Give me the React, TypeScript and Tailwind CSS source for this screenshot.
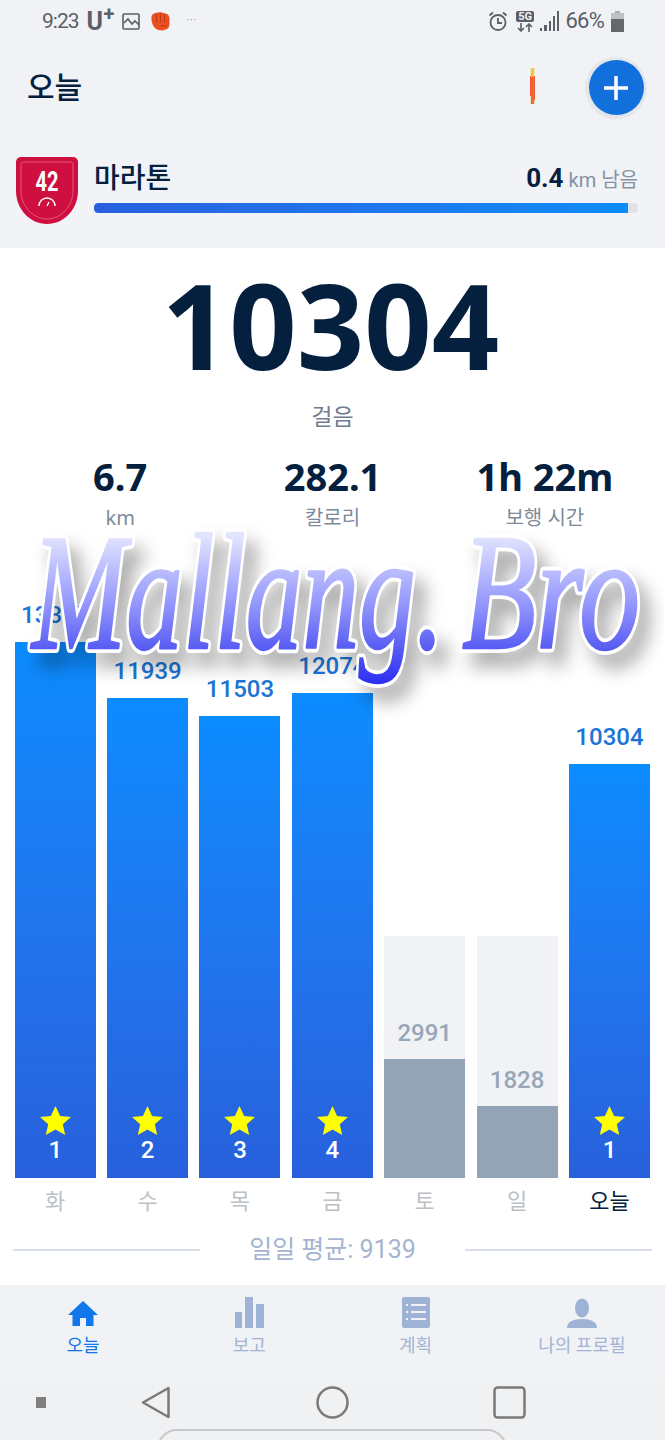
import React from "react";

const FONT = "font-['Roboto','Noto_Sans_CJK_KR',sans-serif]";
const NUM_FONT = "font-['Noto_Sans','Noto_Sans_CJK_KR',sans-serif]";

type Day = {
  day: string;
  value: string;
  fillClass: string;
  trackClass?: string;
  rank?: number;
  today?: boolean;
};

const days: Day[] = [
  { day: "화", value: "13337", fillClass: "h-[536px]", rank: 1 },
  { day: "수", value: "11939", fillClass: "h-[480px]", rank: 2 },
  { day: "목", value: "11503", fillClass: "h-[462px]", rank: 3 },
  { day: "금", value: "12074", fillClass: "h-[485px]", rank: 4 },
  { day: "토", value: "2991", fillClass: "h-[119px]", trackClass: "h-[242px]" },
  { day: "일", value: "1828", fillClass: "h-[72px]", trackClass: "h-[242px]" },
  { day: "오늘", value: "10304", fillClass: "h-[414px]", rank: 1, today: true },
];

function Star() {
  return (
    <svg width="31" height="29" viewBox="0 0 31 29" className="block">
      <path d="M15.5 0l4.6 10 10.9 1.1-8.2 7.2 2.4 10.7-9.7-5.5L5.8 29l2.4-10.7L0 11.1 10.9 10z" fill="#ffff00" />
    </svg>
  );
}

function Bar({ d }: { d: Day }) {
  if (d.rank !== undefined) {
    return (
      <div className="flex-1 flex flex-col items-center justify-end">
        <span className="text-[24px] leading-[28px] mb-[13px] font-medium text-[#1b74d6]">{d.value}</span>
        <div className={`${d.fillClass} w-full bg-gradient-to-b from-[#0a8cff] to-[#2860dc] flex flex-col items-center justify-end pb-[14px]`}>
          <Star />
          <span className="text-[24px] leading-[28px] mt-[1px] font-medium text-white">{d.rank}</span>
        </div>
      </div>
    );
  }
  return (
    <div className={`flex-1 ${d.trackClass} bg-[#f0f2f6] flex flex-col items-center justify-end`}>
      <span className="text-[24px] leading-[28px] mb-[12px] font-medium text-[#97a6b8]">{d.value}</span>
      <div className={`${d.fillClass} w-full bg-[#94a4b7]`} />
    </div>
  );
}

function StatusBar() {
  return (
    <div className="h-[42px] pl-[42px] pr-[41px] flex items-center justify-between text-[#5c5f66]">
      <div className="flex items-center">
        <span className="text-[21px] leading-none tracking-[-1px]">9:23</span>
        <span className="ml-[8px] text-[25px] font-bold leading-none w-[29px] relative">
          U
          <span className="absolute left-[17px] -top-[5px] text-[20px] font-bold">+</span>
        </span>
        <svg width="18" height="17" viewBox="0 0 18 17" fill="none" stroke="#5c5f66" strokeWidth="1.6" className="ml-[6px]">
          <rect x="1" y="1" width="16" height="15" rx="1" />
          <path d="M2 10l4-4 4 5 3-3 4 4" />
        </svg>
        <svg width="20" height="20" viewBox="0 0 20 20" className="ml-[10px]">
          <path d="M2 4C4 2 8 1 12 1.500l5 1.500c1.500 1 2.500 2.500 2.500 4.500v5c0 3-1 4.500-2.500 5.500l-4 1.500c-4 0-7.500-1-9-3.500C2 13 .5 7 2 4z" fill="#ea4f20" />
          <path d="M6.500 3v8M10.500 2.500v9M14.500 3v8M11 15h6" stroke="#b83c16" strokeWidth="1" />
        </svg>
        <span className="ml-[17px] text-[10px] leading-none tracking-[1px] text-[#8b8e94]">···</span>
      </div>
      <div className="flex items-center">
        <svg width="20" height="20" viewBox="0 0 20 20" fill="none" stroke="#5c5f66" strokeWidth="1.800">
          <circle cx="10" cy="11.500" r="7.500" />
          <path d="M10 7v5h4M1.500 4.500L5 1.500M18.500 4.500L15 1.500" />
        </svg>
        <div className="ml-[8px] flex flex-col items-center w-[19px]">
          <span className="text-[11px] leading-[11px] font-bold text-[#f0f2f6] bg-[#5c5f66] rounded-[2px] px-[2px]">5G</span>
          <svg width="16" height="9" viewBox="0 0 16 9" fill="none" stroke="#5c5f66" strokeWidth="1.600" className="mt-[1px]">
            <path d="M4 0v8M1 5l3 3 3-3M12 9V1M9 4l3-3 3 3" />
          </svg>
        </div>
        <svg width="20" height="20" viewBox="0 0 20 20" fill="#5c5f66" className="ml-[5px]">
          <rect x="0" y="17" width="2" height="3" />
          <rect x="4" y="14" width="3" height="6" />
          <rect x="9" y="10" width="2" height="10" />
          <rect x="13" y="5" width="2" height="15" />
          <rect x="17" y="0" width="2" height="20" />
        </svg>
        <span className="ml-[6px] text-[22px] leading-none tracking-[-0.8px]">66%</span>
        <svg width="13" height="21" viewBox="0 0 13 21" className="ml-[7px]">
          <rect x="4" y="0" width="5" height="3" fill="#a9abae" />
          <rect x="0" y="2" width="13" height="7" fill="#bfc1c4" />
          <rect x="0" y="8" width="13" height="13" fill="#65676b" />
        </svg>
      </div>
    </div>
  );
}

function TitleRow() {
  return (
    <div className="h-[91px] pl-[27px] pr-[18px] flex items-center justify-between">
      <h1 className="text-[30px] leading-none font-medium text-[#04203e]">오늘</h1>
      <div className="flex items-center">
        <svg width="5" height="36" viewBox="0 0 5 36" className="mr-[50px] -mt-[3px]">
          <rect x="0" y="0" width="5" height="36" fill="#f4e7c4" />
          <path d="M2 0h2v8h1v24H4v4H1v-8H0V8h1z" fill="#ee5a34" />
          <path d="M2 0h2v9H1z" fill="#f6cf4e" />
          <path d="M2 0h2v36H1z" fill="#e9a13c" fillOpacity="0.25" />
        </svg>
        <div className="w-[62px] h-[62px] rounded-full bg-[#e4e6ea] flex items-center justify-center">
          <div className="w-[55px] h-[55px] rounded-full bg-[#1170dc] flex items-center justify-center">
            <svg width="24" height="24" viewBox="0 0 24 24" stroke="#ffffff" strokeWidth="3.500">
              <path d="M12 0v24M0 12h24" />
            </svg>
          </div>
        </div>
      </div>
    </div>
  );
}

function MarathonBadge() {
  return (
    <svg width="62" height="67" viewBox="0 0 62 67" className="shrink-0">
      <path d="M5 0h52a5 5 0 0 1 5 5v29c0 18-14 33-31 33S0 52 0 34V5a5 5 0 0 1 5-5z" fill="#cf0f40" />
      <path d="M7 5h48a2 2 0 0 1 2 2v27c0 15-12 28-26 28S5 49 5 34V7a2 2 0 0 1 2-2z" fill="none" stroke="#e2587c" strokeWidth="1" />
      <path d="M23 49a8 8 0 0 1 16 0" fill="none" stroke="#ffffff" strokeWidth="1.400" />
      <path d="M31 49l2-4" stroke="#ffffff" strokeWidth="1.400" />
      <text x="31" y="34" textAnchor="middle" fontSize="28" fontWeight="700" fill="#ffffff" fontFamily="Roboto" textLength="23" lengthAdjust="spacingAndGlyphs">42</text>
    </svg>
  );
}

function Marathon() {
  return (
    <div className="h-[115px] bg-[#f1f3f6] pl-[16px] pr-[27px] pt-[24px] flex items-start">
      <MarathonBadge />
      <div className="flex-1 ml-[16px]">
        <div className="flex items-center justify-between h-[38px]">
          <span className="text-[28px] leading-none font-medium text-[#04203e] mt-[6px]">마라톤</span>
          <span className="leading-none mt-[4px] flex items-baseline">
            <span className="text-[26px] font-bold text-[#04203e]">0.4</span>
            <span className="text-[20px] text-[#8492a4] ml-[5px]">km</span>
            <span className="text-[20px] text-[#8492a4] ml-[5px]">남음</span>
          </span>
        </div>
        <div className="mt-[8px] h-[10px] rounded-[4px] bg-[#dfe3e8] overflow-hidden">
          <div className="h-full w-[98.2%] rounded-l-[4px] bg-gradient-to-r from-[#2860dc] to-[#0a8cff]" />
        </div>
      </div>
    </div>
  );
}

function Stat({ value, label }: { value: string; label: string }) {
  return (
    <div className={`${NUM_FONT} flex flex-col items-center`}>
      <span className="text-[38px] leading-[44px] font-bold text-[#04203e]">{value}</span>
      <span className="text-[20px] leading-[24px] mt-[8px] text-[#7d8a9b]">{label}</span>
    </div>
  );
}

function TabIcon({ name, color }: { name: string; color: string }) {
  if (name === "home") {
    return (
      <svg width="30" height="32" viewBox="0 0 30 32" fill={color}>
        <path d="M15 4L0 18h4.500v11h7.500v-8h6v8h7.500V18H30z" />
      </svg>
    );
  }
  if (name === "bars") {
    return (
      <svg width="30" height="32" viewBox="0 0 30 32" fill={color}>
        <rect x="1" y="15" width="7" height="16" />
        <rect x="11" y="0" width="8" height="31" />
        <rect x="22" y="7" width="8" height="24" />
      </svg>
    );
  }
  if (name === "list") {
    return (
      <svg width="30" height="32" viewBox="0 0 30 32">
        <rect x="1" y="0" width="28" height="31" rx="2" fill={color} />
        <path d="M5 8h2M5 15h2M5 22h2M10 8h15M10 15h15M10 22h15" stroke="#f1f2f5" strokeWidth="2" />
      </svg>
    );
  }
  return (
    <svg width="30" height="32" viewBox="0 0 30 32" fill={color}>
      <ellipse cx="15" cy="11" rx="7" ry="9.500" />
      <path d="M0 31c0-6 6-9 15-9s15 3 15 9z" />
    </svg>
  );
}

const tabs = [
  { icon: "home", label: "오늘", active: true },
  { icon: "bars", label: "보고" },
  { icon: "list", label: "계획" },
  { icon: "person", label: "나의 프로필" },
];

function WatermarkWords({ fill, stroke, width }: { fill: string; stroke: string; width: number }) {
  return (
    <g fill={fill} stroke={stroke} strokeWidth={width} strokeLinejoin="round">
      <text x="32" y="123" textLength="412" lengthAdjust="spacingAndGlyphs">Mallang.</text>
      <text x="462" y="123" textLength="178" lengthAdjust="spacingAndGlyphs">Bro</text>
    </g>
  );
}

function Watermark() {
  return (
    <svg
      width="665"
      height="190"
      viewBox="0 0 665 190"
      className="absolute left-0 top-[525px] [filter:drop-shadow(10px_14px_9px_rgba(0,0,0,0.33))]"
    >
      <defs>
        <linearGradient id="inkFill" gradientUnits="userSpaceOnUse" x1="0" y1="10" x2="0" y2="172">
          <stop offset="0" stopColor="#e3e5ff" />
          <stop offset="0.45" stopColor="#8f92fc" />
          <stop offset="0.72" stopColor="#5458f2" />
          <stop offset="1" stopColor="#1b1cf5" />
        </linearGradient>
      </defs>
      <g fontFamily="Liberation Serif" fontStyle="italic" fontSize="165">
        <WatermarkWords fill="#ffffff" stroke="#ffffff" width={10} />
        <WatermarkWords fill="url(#inkFill)" stroke="url(#inkFill)" width={2.5} />
      </g>
    </svg>
  );
}

export default function App() {
  return (
    <div className={`${FONT} relative w-[665px] h-[1440px] overflow-hidden bg-[#f0f2f6] flex flex-col`}>
      <StatusBar />
      <TitleRow />
      <Marathon />

      <main className="h-[1037px] bg-white flex flex-col">
        <div className={`${NUM_FONT} mt-[9px] pr-[4px] text-center text-[118px] leading-[136px] font-bold text-[#04203e]`}>10304</div>
        <div className="mt-[11px] text-center text-[23px] leading-[28px] text-[#6f7d8f]">걸음</div>
        <div className="mt-[22px] px-[14px] grid grid-cols-3">
          <Stat value="6.7" label="km" />
          <Stat value="282.1" label="칼로리" />
          <Stat value="1h 22m" label="보행 시간" />
        </div>

        <div className="mt-auto pl-[14.7px] pr-[15px]">
          <div className="flex items-end gap-[11.33px]">
            {days.map((d) => (
              <Bar key={d.day} d={d} />
            ))}
          </div>
          <div className="mt-[7px] flex gap-[11.33px]">
            {days.map((d) => (
              <span
                key={d.day}
                className={`flex-1 text-center text-[22px] leading-[33px] ${d.today ? "text-[#04203e]" : "text-[#bcbfc4]"}`}
              >
                {d.day}
              </span>
            ))}
          </div>
        </div>
        <div className="mt-[17px] mb-[20px] px-[13px] flex items-center">
          <div className="flex-1 h-[2px] bg-[#d9dfea]" />
          <span className="w-[265px] text-center text-[25px] leading-[30px] text-[#a5b4cf]">일일 평균: 9139</span>
          <div className="flex-1 h-[2px] bg-[#d9dfea]" />
        </div>
      </main>

      <nav className="h-[95px] bg-[#f0f2f5] grid grid-cols-4 pt-[12px]">
        {tabs.map((t) => {
          const color = t.active ? "#1177ea" : "#9db2d4";
          return (
            <div key={t.label} className="flex flex-col items-center">
              <TabIcon name={t.icon} color={color} />
              <span className={`mt-[5px] text-[18px] leading-[24px] ${t.active ? "text-[#1177ea]" : "text-[#a3b5d4]"}`}>
                {t.label}
              </span>
            </div>
          );
        })}
      </nav>

      <div className="relative flex-1 bg-[#f0f1f2]">
        <div className="flex items-center h-[44px] pl-[36px]">
          <div className="w-[10px] h-[11px] bg-[#808080]" />
          <svg width="30" height="33" viewBox="0 0 30 33" fill="none" stroke="#7a7a7a" strokeWidth="2.500" strokeLinejoin="round" className="ml-[95px]">
            <path d="M2 16.500L27.500 2v29z" />
          </svg>
          <svg width="33" height="33" viewBox="0 0 33 33" fill="none" stroke="#7a7a7a" strokeWidth="2.500" className="ml-[145px]">
            <circle cx="16.500" cy="16.500" r="15" />
          </svg>
          <svg width="33" height="33" viewBox="0 0 33 33" fill="none" stroke="#7a7a7a" strokeWidth="2.500" className="ml-[144px]">
            <rect x="1.500" y="1.500" width="30" height="30" rx="3" />
          </svg>
        </div>
        <div className="absolute left-[157px] top-[49px] w-[350px] h-[40px] border-2 border-[#c6c7c9] rounded-[24px]" />
      </div>

      <Watermark />
    </div>
  );
}
